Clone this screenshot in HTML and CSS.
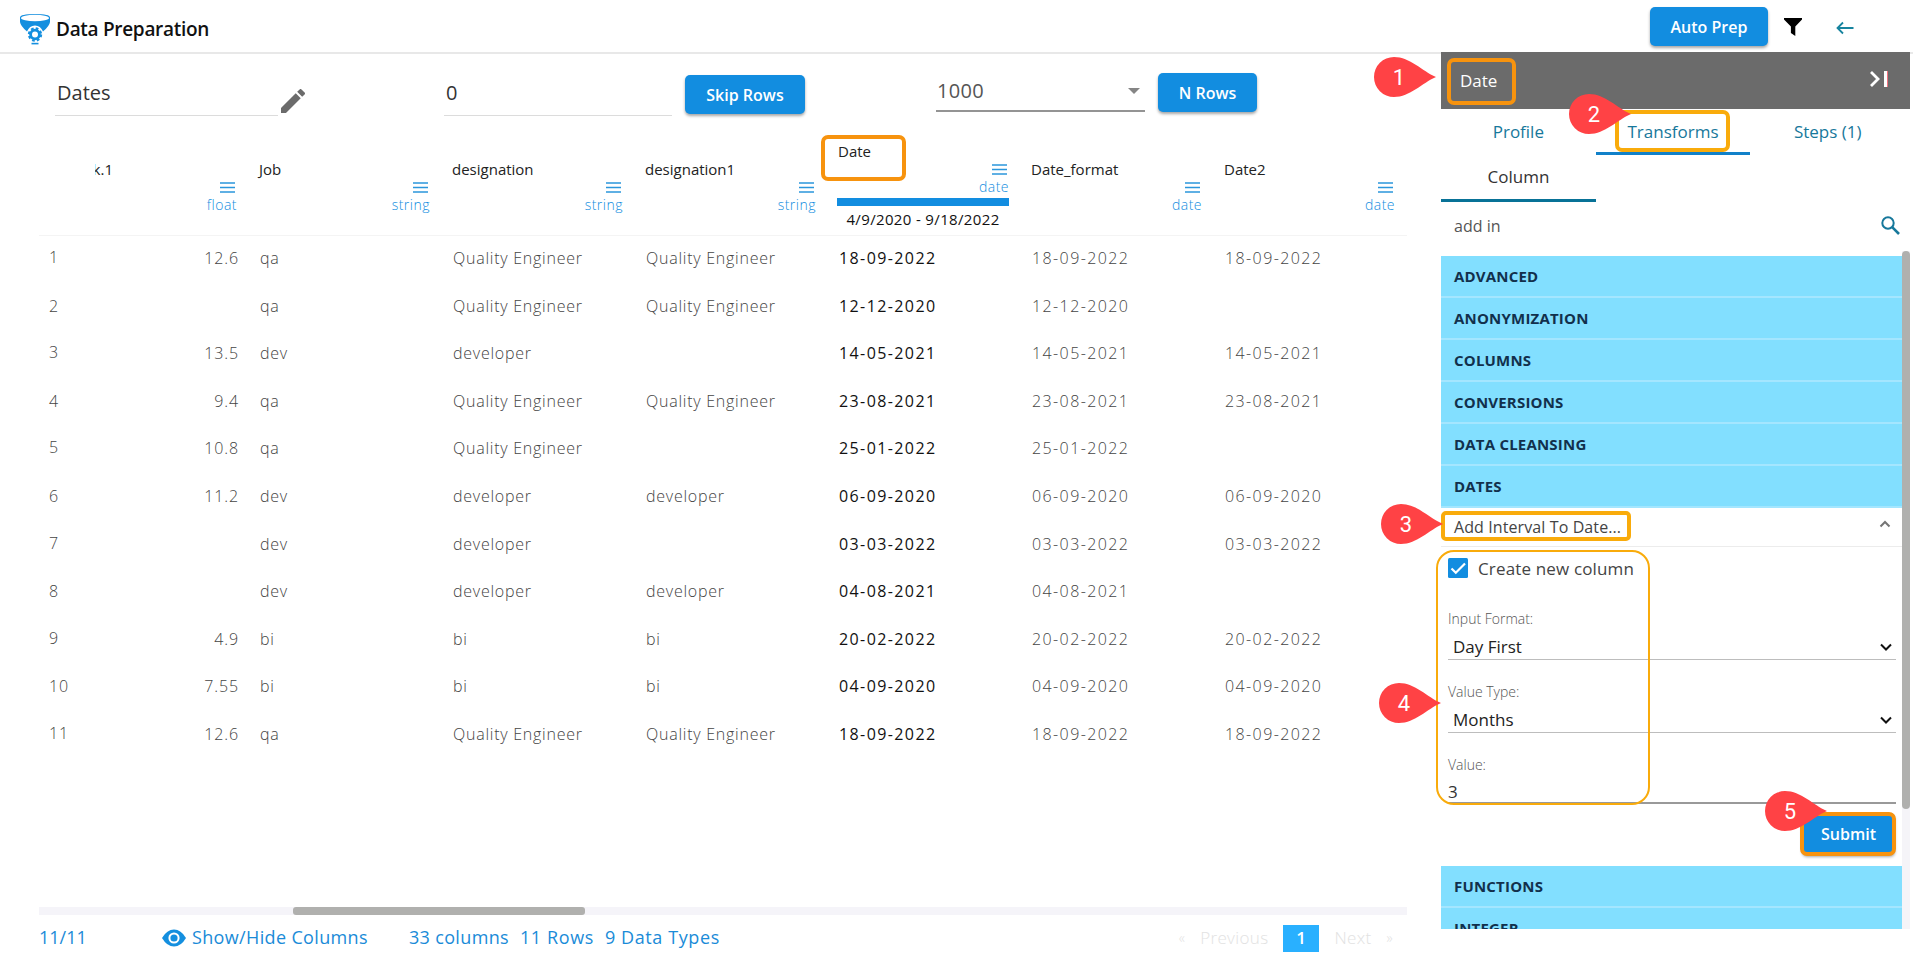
FILE: index.html
```
<!DOCTYPE html>
<html lang="en">
<head>
    <meta charset="UTF-8">
    <meta name="viewport" content="width=device-width, initial-scale=1.0">
    <title>Data Preparation</title>
    <link rel="stylesheet" href="styles.css">
</head>
<body>
    <header class="topbar">
        <svg class="logo" viewBox="0 0 32 34" width="32" height="34">
            <path d="M1 4.5 Q1 1 16 1 T31 4.5 V9 Q30.5 13 24 18.5 Q21.5 12.5 16 12.5 T8 18.5 Q1.5 13 1 9 Z" fill="#148fdf"/>
            <ellipse cx="16" cy="5" rx="14" ry="3.2" fill="#fff"/>
            <circle cx="16" cy="21.5" r="4.4" fill="none" stroke="#148fdf" stroke-width="2.8"/>
            <circle cx="16" cy="21.5" r="6.1" fill="none" stroke="#148fdf" stroke-width="2.2" stroke-dasharray="2.7 2.09"/>
            <path d="M12.5 30.6 H19.5" stroke="#148fdf" stroke-width="1.6"/>
        </svg>
        <h1>Data Preparation</h1>
        <button class="btn auto-prep">Auto Prep</button>
        <svg class="filter" viewBox="0 0 18 18" width="18" height="18"><path d="M0 0 H18 V1.5 L11.3 8.5 V18 L6.9 15 V8.5 L0 1.5 Z"/></svg>
        <svg class="back" viewBox="0 0 18 14" width="18" height="14"><path d="M7 1.5 L1.5 7 L7 12.5 M1.5 7 H17.5" fill="none" stroke="#17849f" stroke-width="1.8"/></svg>
    </header>

    <div class="page">
        <main class="main">
            <div class="toolbar">
                <div class="field name-field">Dates</div>
                <svg class="pencil" viewBox="3 3 18 18" width="24" height="24"><path d="M3 17.25V21h3.75L17.81 9.94l-3.75-3.75L3 17.25zM20.71 7.04a1 1 0 0 0 0-1.41l-2.34-2.34a1 1 0 0 0-1.41 0l-1.83 1.83 3.75 3.75 1.83-1.83z" fill="#6b6b6b"/></svg>
                <div class="field skip-field">0</div>
                <button class="btn skip-btn">Skip Rows</button>
                <div class="rows-select">1000</div>
                <button class="btn rows-btn">N Rows</button>
            </div>

            <div class="grid" id="grid"></div>

            <div class="hscroll"><div class="hthumb"></div></div>

            <footer class="footer">
                <span class="count">11/11</span>
                <svg class="eye" viewBox="0 0 24 18" width="24" height="18"><path d="M0 9 Q5 0.5 12 0.5 T24 9 Q19 17.5 12 17.5 T0 9 Z" fill="#148fdf"/><circle cx="12" cy="9" r="4.6" fill="none" stroke="#fff" stroke-width="2"/></svg>
                <span class="showhide">Show/Hide Columns</span>
                <span class="cols">33 columns</span>
                <span class="rows">11 Rows</span>
                <span class="types">9 Data Types</span>
                <div class="pager">
                    <span class="arrow">«</span>
                    <span class="prev">Previous</span>
                    <span class="current">1</span>
                    <span>Next</span>
                    <span class="arrow">»</span>
                </div>
            </footer>
        </main>

        <aside class="panel">
            <div class="panel-head">
                <span>Date</span>
                <svg viewBox="0 0 20 18" width="20" height="18"><path d="M2 2 L9 9 L2 16" fill="none" stroke="#fff" stroke-width="2.8"/><path d="M16.5 1 V17" stroke="#fff" stroke-width="3"/><path d="M18.5 1 V17" stroke="#f0707c" stroke-width="1"/></svg>
            </div>
            <div class="tabs">
                <div class="tab">Profile</div>
                <div class="tab active">Transforms</div>
                <div class="tab">Steps (1)</div>
            </div>
            <div class="subtab">Column</div>
            <div class="search">
                <span>add in</span>
                <svg viewBox="0 0 19 19" width="19" height="19"><circle cx="7" cy="7" r="5.7" fill="none" stroke="#17789b" stroke-width="2"/><path d="M11.2 11.2 L18 18" stroke="#17789b" stroke-width="2.6"/></svg>
            </div>
            <div class="scroll-area">
                <div class="list">
                    <div class="cat">ADVANCED</div>
                    <div class="cat">ANONYMIZATION</div>
                    <div class="cat">COLUMNS</div>
                    <div class="cat">CONVERSIONS</div>
                    <div class="cat">DATA CLEANSING</div>
                    <div class="cat">DATES</div>
                    <div class="transform">
                        <span>Add Interval To Date...</span>
                        <svg viewBox="0 0 12 8" width="12" height="8"><path d="M1.5 6.5 L6 2 L10.5 6.5" fill="none" stroke="#757575" stroke-width="2"/></svg>
                    </div>
                    <div class="form">
                        <div class="check">
                            <svg viewBox="0 0 20 20" width="20" height="20"><rect width="20" height="20" rx="1.5" fill="#128de0"/><path d="M3.5 10.5 L7.8 14.8 L17 5.5" fill="none" stroke="#fff" stroke-width="2.2"/></svg>
                            <span>Create new column</span>
                        </div>
                        <label>Input Format:</label>
                        <div class="select">Day First
                            <svg viewBox="0 0 12 8" width="12" height="8"><path d="M1 1.5 L6 6.5 L11 1.5" fill="none" stroke="#111" stroke-width="2"/></svg>
                        </div>
                        <label>Value Type:</label>
                        <div class="select">Months
                            <svg viewBox="0 0 12 8" width="12" height="8"><path d="M1 1.5 L6 6.5 L11 1.5" fill="none" stroke="#111" stroke-width="2"/></svg>
                        </div>
                        <label>Value:</label>
                        <div class="value">3</div>
                        <button class="btn submit">Submit</button>
                    </div>
                    <div class="cat">FUNCTIONS</div>
                    <div class="cat">INTEGER</div>
                </div>
                <div class="vscroll"><div class="vthumb"></div></div>
            </div>
        </aside>
    </div>

    <!-- step markers -->
    <div class="mark mark-col"></div>
    <div class="mark mark-head"></div>
    <div class="mark yellow mark-tab"></div>
    <div class="mark yellow mark-transform"></div>
    <div class="mark yellow mark-form"></div>
    <div class="mark mark-submit"></div>
    <div class="pin pin1"><svg viewBox="0 0 62 40"><path d="M20 0 C36 0 48 14 62 20 C48 26 36 40 20 40 A20 20 0 0 1 20 0 Z"/></svg><span>1</span></div>
    <div class="pin pin2"><svg viewBox="0 0 62 40"><path d="M20 0 C36 0 48 14 62 20 C48 26 36 40 20 40 A20 20 0 0 1 20 0 Z"/></svg><span>2</span></div>
    <div class="pin pin3"><svg viewBox="0 0 62 40"><path d="M20 0 C36 0 48 14 62 20 C48 26 36 40 20 40 A20 20 0 0 1 20 0 Z"/></svg><span>3</span></div>
    <div class="pin pin4"><svg viewBox="0 0 62 40"><path d="M20 0 C36 0 48 14 62 20 C48 26 36 40 20 40 A20 20 0 0 1 20 0 Z"/></svg><span>4</span></div>
    <div class="pin pin5"><svg viewBox="0 0 62 40"><path d="M20 0 C36 0 48 14 62 20 C48 26 36 40 20 40 A20 20 0 0 1 20 0 Z"/></svg><span>5</span></div>

    <script src="grid.js"></script>
</body>
</html>
```
FILE: styles.css
```
* { box-sizing: border-box; }
body { margin: 0; height: 953px; overflow: hidden; position: relative; background: #fff; font-family: "Open Sans", "Noto Sans", sans-serif; color: #333; }
.btn { background: #128de0; color: #fff; border: none; border-radius: 5px; height: 39px; padding: 0; font: 600 16px "Open Sans", sans-serif; box-shadow: 0 2px 3px rgba(0, 0, 0, .35); }

/* top bar */
.topbar { height: 54px; border-bottom: 2px solid #e8e8e8; display: flex; align-items: center; padding-left: 19px; }
.logo { margin-top: 8px; }
.topbar h1 { margin: 5px auto 0 5px; font-size: 19px; font-weight: 600; letter-spacing: -.3px; color: #111; }
.auto-prep { width: 118px; margin: 1px 16px 0 0; }
.filter { margin: 2px 34px 0 0; }
.back { margin: 3px 59px 0 0; }

.page { display: flex; height: 899px; }
.main { width: 1441px; padding: 19px 34px 0 39px; }

/* toolbar */
.toolbar { display: flex; height: 57px; padding-left: 16px; align-items: flex-start; }
.field { height: 43px; border-bottom: 1px solid #dcdcdc; font-size: 20px; line-height: 40px; padding-left: 2px; }
.name-field { width: 223px; }
.pencil { margin: 16px 0 0 3px; }
.skip-field { width: 228px; margin-left: 139px; }
.skip-btn { width: 120px; margin: 2px 0 0 13px; }
.rows-select { width: 209px; height: 39px; margin-left: 131px; border-bottom: 2px solid #949494; font-size: 20px; line-height: 35px; letter-spacing: .3px; color: #555; display: flex; justify-content: space-between; padding-left: 1px; }
.rows-select::after { content: ""; margin: 15px 5px 0 0; border: 6px solid transparent; border-top-color: #858585; height: 0; }
.rows-btn { width: 99px; margin-left: 13px; }

/* data grid */
.grid { height: 777px; overflow: hidden; }
.row { display: flex; height: 47.6px; font-size: 16px; font-weight: 300; color: #444; line-height: 47px; letter-spacing: .75px; }
.row div { width: 193px; padding: 0 21px 0 0; flex: none; white-space: nowrap; }
.row .num { width: 56px; padding-left: 10px; position: relative; top: -1px; letter-spacing: .9px; }
.row:nth-child(odd) .num { top: 0; }
.row .float { width: 165px; padding-right: 21px; text-align: right; letter-spacing: .9px; }
.row .day { letter-spacing: 1.4px; }
.row .on { color: #111; font-weight: 400; }
.head { display: flex; height: 106px; border-bottom: 1px solid #f4f4f4; padding-left: 56px; margin-bottom: -1px; }
.head .col { width: 193px; padding: 29px 22px 0 0; display: flex; flex-direction: column; align-items: flex-end; flex: none; }
.head .col:first-child { width: 164px; }
.head .on { padding-top: 11px; }
.col b { align-self: flex-start; font-weight: 400; font-size: 15px; line-height: 20px; color: #222; }
.col svg { margin: 3px 2px 0 0; }
.col i { font-style: normal; font-size: 14px; font-weight: 300; letter-spacing: .5px; color: #128de0; line-height: 20px; margin-top: 2px; }
.bar { width: 172px; height: 8px; background: #128de0; margin-top: 1px; }
.range { width: 172px; text-align: center; font-size: 15px; letter-spacing: .35px; line-height: 27px; color: #111; }
.col .cut { overflow: hidden; width: 18px; display: flex; justify-content: flex-end; }

.hscroll { height: 8px; background: #f5f4f9; }
.hthumb { width: 292px; height: 8px; margin-left: 254px; border-radius: 3px; background: #b0b0ae; }

.footer { display: flex; align-items: center; height: 44px; font-size: 18px; letter-spacing: .35px; color: #1a8bd8; }
.count { width: 123px; letter-spacing: 0; }
.eye { margin-top: 2px; }
.showhide { margin: 0 41px 0 6px; }
.cols { margin-right: 11px; }
.rows { margin-right: 11px; letter-spacing: .6px; }
.types { letter-spacing: .6px; }
.pager { margin-left: auto; margin-right: 14px; display: flex; align-items: center; color: #e2e2e2; font-weight: 300; font-size: 17px; }
.arrow { font-size: 14px; }
.prev { margin: 0 15px 0 15px; }
.current { width: 36px; height: 27px; line-height: 26px; background: #29b0ff; color: #fff; text-align: center; font-weight: 600; margin: 3px 15px 0 0; }
.pager .arrow:last-child { margin-left: 15px; }

/* right panel */
.panel { width: 469px; margin-top: -2px; }
.panel-head { height: 57px; background: #6b6b6b; color: #fff; display: flex; justify-content: space-between; align-items: center; padding: 0 21px 0 19px; font-size: 17px; }
.panel-head svg { margin-top: -4px; }
.tabs { display: flex; height: 46px; width: 464px; }
.tab { flex: 1; text-align: center; font-size: 17px; line-height: 45px; color: #17789b; }
.tab.active { border-bottom: 3px solid #1181c9; }
.subtab { width: 155px; height: 47px; text-align: center; font-size: 17px; line-height: 44px; border-bottom: 3px solid #087297; color: #333; }
.search { height: 49px; display: flex; justify-content: space-between; align-items: center; padding: 0 10px 2px 13px; font-size: 16px; color: #555; }
.scroll-area { display: flex; height: 678px; overflow: hidden; }
.list { width: 461px; padding-top: 5px; flex: none; }
.cat { height: 42px; background: #82dfff; border-bottom: 2px solid #a4e6ff; padding-left: 13px; font-size: 15px; font-weight: 700; line-height: 41px; letter-spacing: .2px; color: #12304c; }
.vscroll { width: 8px; background: #f5f4f8; height: 678px; }
.vthumb { height: 558px; background: #b0b0ae; border-radius: 4px; }
.transform { height: 39px; border-bottom: 1px solid #ececec; display: flex; justify-content: space-between; padding: 0 11px 0 13px; font-size: 16px; line-height: 38px; letter-spacing: .1px; color: #444; }
.transform svg { margin-top: 12px; }
.form { padding: 9px 6px 0 7px; height: 319px; }
.check { display: flex; align-items: center; gap: 10px; height: 24px; font-size: 17px; letter-spacing: .15px; color: #444; }
.form label { display: block; margin-top: 27px; height: 20px; line-height: 20px; font-size: 14px; font-weight: 300; color: #555; }
.form .check + label { margin-top: 29px; }
.select { height: 32px; margin-top: -1px; border-bottom: 1px solid #bdbdbd; padding: 6px 4px 0 5px; display: flex; justify-content: space-between; align-items: center; font-size: 17px; color: #222; }
.form .select + label { margin-top: 22px; }
.value { height: 29px; border-bottom: 2px solid #999; font-size: 17px; line-height: 34px; }
.submit { display: block; width: 93px; height: 42px; margin: 9px 1px 0 auto; }

/* markers drawn over the page */
.mark { position: absolute; border: 4px solid #f7930e; border-radius: 7px; }
.mark.yellow { border-color: #f9ab0b; }
.mark-col { left: 821px; top: 135px; width: 85px; height: 46px; }
.mark-head { left: 1447px; top: 58px; width: 69px; height: 47px; }
.mark-tab { left: 1615px; top: 110px; width: 115px; height: 42px; }
.mark-transform { left: 1441px; top: 511px; width: 190px; height: 30px; border-radius: 5px; }
.mark.mark-form { left: 1436px; top: 550px; width: 214px; height: 255px; border-width: 2px; border-radius: 18px; }
.mark-submit { left: 1800px; top: 812px; width: 96px; height: 44px; }
.pin { position: absolute; width: 62px; height: 40px; color: #fff; }
.pin svg { display: block; fill: #ff4245; }
.pin span { position: absolute; left: 0; top: 0; width: 50px; text-align: center; font: 22px/41px Roboto, sans-serif; }
.pin1 { left: 1374px; top: 57px; }
.pin2 { left: 1569px; top: 94px; }
.pin3 { left: 1381px; top: 504px; }
.pin4 { left: 1379px; top: 683px; }
.pin5 { left: 1765px; top: 791px; }
```
FILE: grid.js
```
const columns = [
    ['k.1', 'float'], ['Job', 'string'], ['designation', 'string'], ['designation1', 'string'],
    ['Date', 'date'], ['Date_format', 'date'], ['Date2', 'date']
];

const QE = 'Quality Engineer';
const rows = [
    ['12.6', 'qa', QE, QE, '18-09-2022', '18-09-2022', '18-09-2022'],
    ['', 'qa', QE, QE, '12-12-2020', '12-12-2020', ''],
    ['13.5', 'dev', 'developer', '', '14-05-2021', '14-05-2021', '14-05-2021'],
    ['9.4', 'qa', QE, QE, '23-08-2021', '23-08-2021', '23-08-2021'],
    ['10.8', 'qa', QE, '', '25-01-2022', '25-01-2022', ''],
    ['11.2', 'dev', 'developer', 'developer', '06-09-2020', '06-09-2020', '06-09-2020'],
    ['', 'dev', 'developer', '', '03-03-2022', '03-03-2022', '03-03-2022'],
    ['', 'dev', 'developer', 'developer', '04-08-2021', '04-08-2021', ''],
    ['4.9', 'bi', 'bi', 'bi', '20-02-2022', '20-02-2022', '20-02-2022'],
    ['7.55', 'bi', 'bi', 'bi', '04-09-2020', '04-09-2020', '04-09-2020'],
    ['12.6', 'qa', QE, QE, '18-09-2022', '18-09-2022', '18-09-2022']
];

const classes = ['float', '', '', '', 'day on', 'day', 'day'];
const menu = '<svg viewBox="0 0 15 11" width="15" height="11"><path d="M0 1H15M0 5.5H15M0 10H15" stroke="#2b96dc" stroke-width="1.5"/></svg>';

let html = '<div class="head">';
columns.forEach(function ([name, type], i) {
    const on = name === 'Date';
    html += `<div class="col ${on ? 'on' : ''}"><b class="${i === 0 ? 'cut' : ''}">${name}</b>${menu}<i>${type}</i>`;
    if (on) html += '<div class="bar"></div><div class="range">4/9/2020 - 9/18/2022</div>';
    html += '</div>';
});
html += '</div>';

rows.forEach(function (row, i) {
    html += `<div class="row"><div class="num">${i + 1}</div>`;
    row.forEach(function (value, c) {
        html += `<div class="${classes[c]}">${value}</div>`;
    });
    html += '</div>';
});
document.getElementById('grid').innerHTML = html;
```
